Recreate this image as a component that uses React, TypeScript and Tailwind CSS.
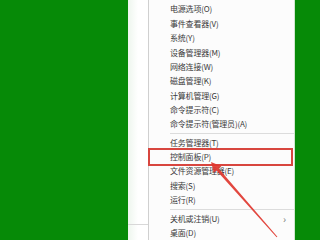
import React from 'react';

type Row = { label: string; sep?: boolean; sub?: boolean; hit?: boolean };

const rows: Row[] = [
  { label: '电源选项(O)' },
  { label: '事件查看器(V)' },
  { label: '系统(Y)' },
  { label: '设备管理器(M)' },
  { label: '网络连接(W)' },
  { label: '磁盘管理(K)' },
  { label: '计算机管理(G)' },
  { label: '命令提示符(C)' },
  { label: '命令提示符(管理员)(A)' },
  { label: '', sep: true },
  { label: '任务管理器(T)' },
  { label: '控制面板(P)', hit: true },
  { label: '文件资源管理器(E)' },
  { label: '搜索(S)' },
  { label: '运行(R)' },
  { label: '', sep: true },
  { label: '关机或注销(U)', sub: true },
  { label: '桌面(D)' },
];

const MenuRow: React.FC<{ row: Row }> = ({ row }) => {
  if (row.sep) {
    return (
      <div className="h-[4px] pl-[21px] flex items-center">
        <div className="w-full border-t border-[#dcdcdc]" />
      </div>
    );
  }
  return (
    <div className="relative h-[14.6px] pl-[21px] pr-[8px] flex items-center justify-between">
      <span className="text-[8px] leading-none text-[#3a3a3a] tracking-[-0.2px]">{row.label}</span>
      {row.sub && <span className="text-[10px] leading-none text-[#777]">›</span>}
      {row.hit && (
        <div className="absolute left-[-1px] right-[1px] top-[-1.5px] bottom-[-1.5px] border-2 border-[#d8463f]" />
      )}
    </div>
  );
};

export default function App() {
  return (
    <div
      className="relative w-[320px] h-[240px] flex overflow-hidden bg-[#068a07]"
      style={{ fontFamily: '"Noto Sans CJK SC", "Noto Sans", sans-serif' }}
    >
      <div className="w-[128px] shrink-0 bg-[#068a07]" />

      {/* desktop strip left of the menu */}
      <div className="w-[21px] shrink-0 flex flex-col bg-gradient-to-r from-[#eef6ee] via-white to-white border-r border-[#d0d0d0]">
        <div className="flex-1" />
        <div className="h-[16px] border-t border-[#d8d8d8]" />
      </div>

      {/* context menu */}
      <div className="w-[145px] shrink-0 bg-[#fcfcfc] pt-[2.2px] flex flex-col">
        {rows.map((r, i) => (
          <MenuRow key={i} row={r} />
        ))}
      </div>

      <div className="flex-1 bg-[#068a07] border-l border-[#cfe6cf]" />

      {/* red pointer arrow */}
      <svg className="absolute inset-0 pointer-events-none" width="320" height="240" viewBox="0 0 320 240">
        <polygon
          points="211,162 221.4,166.2 218.7,168.5 277.4,236.7 276.6,237.3 216.5,170.5 213.9,172.8"
          fill="#e0372f"
          opacity="0.92"
        />
      </svg>
    </div>
  );
}
